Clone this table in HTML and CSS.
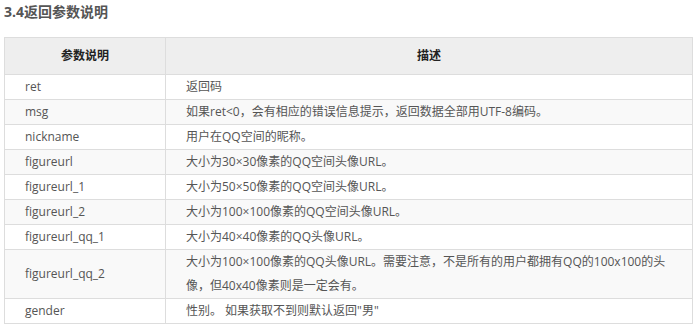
FILE: index.html
```html
<!DOCTYPE html>
<html lang="zh-CN">
<head>
<meta charset="utf-8">
<link rel="stylesheet" href="styles.css">
</head>
<body>
<h3 class="title">3.4返回参数说明</h3>
<table class="params">
  <colgroup><col class="c1"><col class="c2"></colgroup>
  <thead>
    <tr><th>参数说明</th><th>描述</th></tr>
  </thead>
  <tbody>
    <tr><td>ret</td><td>返回码</td></tr>
    <tr><td>msg</td><td>如果ret&lt;0，会有相应的错误信息提示，返回数据全部用UTF-8编码。</td></tr>
    <tr><td>nickname</td><td>用户在QQ空间的昵称。</td></tr>
    <tr><td>figureurl</td><td>大小为30×30像素的QQ空间头像URL。</td></tr>
    <tr><td>figureurl_1</td><td>大小为50×50像素的QQ空间头像URL。</td></tr>
    <tr><td>figureurl_2</td><td>大小为100×100像素的QQ空间头像URL。</td></tr>
    <tr><td>figureurl_qq_1</td><td>大小为40×40像素的QQ头像URL。</td></tr>
    <tr><td>figureurl_qq_2</td><td>大小为100×100像素的QQ头像URL。需要注意，不是所有的用户都拥有QQ的100x100的头像，但40x40像素则是一定会有。</td></tr>
    <tr><td>gender</td><td>性别。 如果获取不到则默认返回"男"</td></tr>
  </tbody>
</table>
</body>
</html>
```
FILE: styles.css
```css
html, body {
  margin: 0;
  padding: 0;
  background: #fff;
}
body {
  padding: 0 4px;
  font-family: "Open Sans", "Noto Sans CJK SC", sans-serif;
  color: #555;
}
.title {
  margin: 0 0 13px;
  font-size: 14px;
  line-height: 24px;
  font-weight: bold;
  color: #555;
}
.params {
  border-collapse: collapse;
  width: 689px;
  table-layout: fixed;
  font-size: 12px;
}
.params .c1 { width: 161px; }
.params th, .params td {
  border: 1px solid #ddd;
  text-align: left;
  vertical-align: middle;
  padding: 0 20px;
}
.params th {
  background: #eee;
  color: #222;
  font-weight: bold;
  text-align: center;
  line-height: 36px;
}
.params td {
  line-height: 24px;
  color: #555;
}
.params tbody tr:nth-child(even) td {
  background: #f9f9f9;
}
```
